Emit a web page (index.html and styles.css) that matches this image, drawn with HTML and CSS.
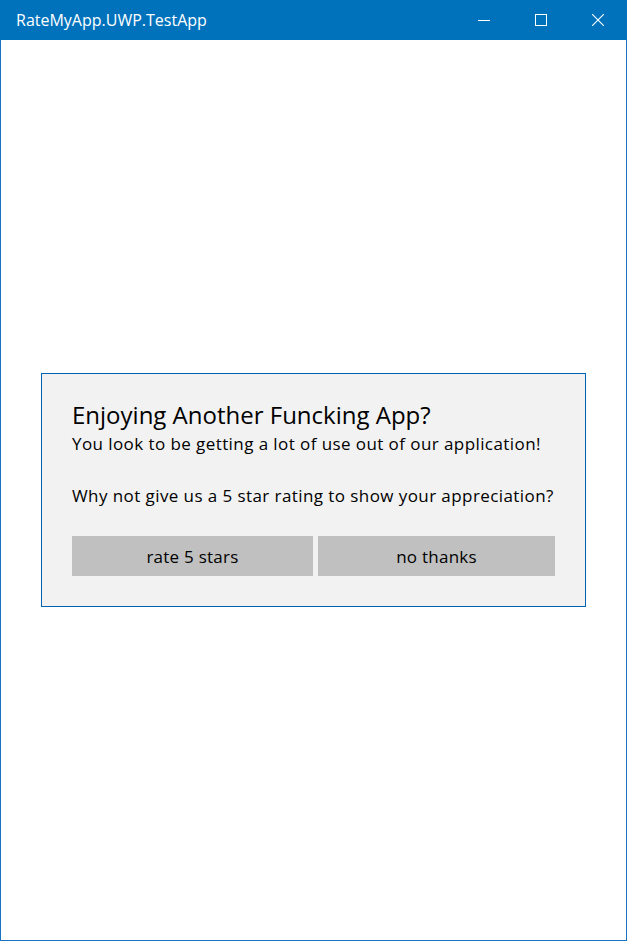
FILE: index.html
```html
<!DOCTYPE html>
<html lang="en">
<head>
<meta charset="utf-8">
<title>RateMyApp.UWP.TestApp</title>
<link rel="stylesheet" href="styles.css">
</head>
<body>
<div class="window">
  <header class="titlebar">
    <span class="title">RateMyApp.UWP.TestApp</span>
    <div class="caption-buttons">
      <span class="cap-btn">
        <svg width="12" height="12" viewBox="0 0 12 12"><path d="M0 6.5H12" stroke="#fff" stroke-width="1" fill="none"/></svg>
      </span>
      <span class="cap-btn">
        <svg width="12" height="12" viewBox="0 0 12 12"><rect x="0.5" y="0.5" width="11" height="11" stroke="#fff" stroke-width="1" fill="none"/></svg>
      </span>
      <span class="cap-btn">
        <svg width="12" height="12" viewBox="0 0 12 12"><path d="M0 0L12 12M12 0L0 12" stroke="#fff" stroke-width="1.1" fill="none"/></svg>
      </span>
    </div>
  </header>
  <main class="content">
    <section class="dialog">
      <h1 class="dialog-title">Enjoying Another Funcking App?</h1>
      <p class="dialog-text">You look to be getting a lot of use out of our application!<br><br>Why not give us a 5 star rating to show your appreciation?</p>
      <div class="dialog-buttons">
        <button class="btn btn-rate">rate 5 stars</button>
        <button class="btn btn-no">no thanks</button>
      </div>
    </section>
  </main>
</div>
</body>
</html>
```

FILE: styles.css
```css
* { box-sizing: border-box; }
html, body {
  margin: 0;
  padding: 0;
  width: 627px;
  height: 941px;
  background: #ffffff;
  font-family: "Open Sans", "Noto Sans", sans-serif;
}
.window {
  width: 627px;
  height: 941px;
  border: 1px solid #1a73bd;
  border-top: none;
  display: flex;
  flex-direction: column;
}
.titlebar {
  height: 40px;
  margin: 0 -1px;
  background: #0072bc;
  color: #ffffff;
  display: flex;
  align-items: center;
  justify-content: space-between;
  flex: none;
}
.title {
  padding-left: 16px;
  font-size: 16px;
  line-height: 40px;
}
.caption-buttons {
  display: flex;
  height: 40px;
  padding-right: 1px;
}
.cap-btn {
  width: 57px;
  height: 40px;
  display: flex;
  align-items: center;
  justify-content: center;
}
.cap-btn svg { display: block; }
.content {
  flex: 1;
  display: flex;
  align-items: center;
  justify-content: center;
}
.dialog {
  width: 545px;
  height: 234px;
  background: #f2f2f2;
  border: 1px solid #0063b1;
  padding: 30px 30px 30px 30px;
  color: #000000;
  display: flex;
  flex-direction: column;
}
.dialog-title {
  margin: 0;
  font-size: 24px;
  font-weight: 400;
  line-height: 22px;
}
.dialog-text {
  margin: 5px -10px 0 0;
  font-size: 17px;
  letter-spacing: 0.42px;
  line-height: 26px;
  white-space: nowrap;
}
.dialog-buttons {
  margin-top: 27px;
  display: grid;
  grid-template-columns: 241px 237px;
  column-gap: 5px;
}
.btn {
  height: 40px;
  border: none;
  background: #c0c0c0;
  color: #000000;
  font-family: inherit;
  font-size: 17px;
  letter-spacing: 0.25px;
  padding: 0 0 0 0;
}
```
